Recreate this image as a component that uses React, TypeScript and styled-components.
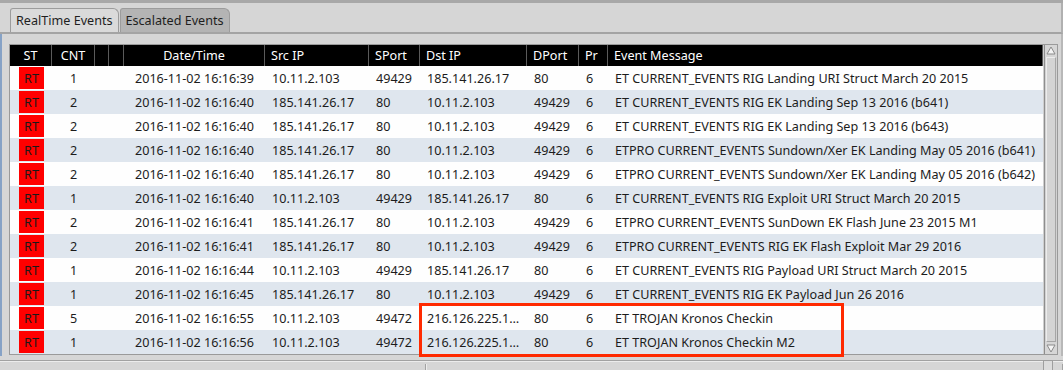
import styled, { createGlobalStyle } from "styled-components";

const GlobalStyle = createGlobalStyle`
  html, body {
    margin: 0;
    padding: 0;
    background: #d6d6d6;
  }
  body {
    font-family: "Noto Sans", "Open Sans", sans-serif;
    font-size: 12.6px;
    color: #1c1c1c;
  }
`;

type EventRow = {
  cnt: string;
  time: string;
  src: string;
  sport: string;
  dst: string;
  dport: string;
  pr: string;
  msg: string;
};

const A = "185.141.26.17";
const B = "10.11.2.103";
const K = "216.126.225.1…";

const rows: EventRow[] = [
  { cnt: "1", time: "16:16:39", src: B, sport: "49429", dst: A, dport: "80", pr: "6", msg: "ET CURRENT_EVENTS RIG Landing URI Struct March 20 2015" },
  { cnt: "2", time: "16:16:40", src: A, sport: "80", dst: B, dport: "49429", pr: "6", msg: "ET CURRENT_EVENTS RIG EK Landing Sep 13 2016 (b641)" },
  { cnt: "2", time: "16:16:40", src: A, sport: "80", dst: B, dport: "49429", pr: "6", msg: "ET CURRENT_EVENTS RIG EK Landing Sep 13 2016 (b643)" },
  { cnt: "2", time: "16:16:40", src: A, sport: "80", dst: B, dport: "49429", pr: "6", msg: "ETPRO CURRENT_EVENTS Sundown/Xer EK Landing May 05 2016 (b641)" },
  { cnt: "2", time: "16:16:40", src: A, sport: "80", dst: B, dport: "49429", pr: "6", msg: "ETPRO CURRENT_EVENTS Sundown/Xer EK Landing May 05 2016 (b642)" },
  { cnt: "1", time: "16:16:40", src: B, sport: "49429", dst: A, dport: "80", pr: "6", msg: "ET CURRENT_EVENTS RIG Exploit URI Struct March 20 2015" },
  { cnt: "2", time: "16:16:41", src: A, sport: "80", dst: B, dport: "49429", pr: "6", msg: "ETPRO CURRENT_EVENTS SunDown EK Flash June 23 2015 M1" },
  { cnt: "2", time: "16:16:41", src: A, sport: "80", dst: B, dport: "49429", pr: "6", msg: "ETPRO CURRENT_EVENTS RIG EK Flash Exploit Mar 29 2016" },
  { cnt: "1", time: "16:16:44", src: B, sport: "49429", dst: A, dport: "80", pr: "6", msg: "ET CURRENT_EVENTS RIG Payload URI Struct March 20 2015" },
  { cnt: "1", time: "16:16:45", src: A, sport: "80", dst: B, dport: "49429", pr: "6", msg: "ET CURRENT_EVENTS RIG EK Payload Jun 26 2016" },
  { cnt: "5", time: "16:16:55", src: B, sport: "49472", dst: K, dport: "80", pr: "6", msg: "ET TROJAN Kronos Checkin" },
  { cnt: "1", time: "16:16:56", src: B, sport: "49472", dst: K, dport: "80", pr: "6", msg: "ET TROJAN Kronos Checkin M2" },
];

const COLS = "42px 43px 14px 15px 141px 104px 51px 107px 52px 29px 1fr";

const Window = styled.div`
  position: relative;
  width: 1063px;
  height: 370px;
  box-sizing: border-box;
  border-top: 3px solid #a8a8a8;
  background: #d6d6d6;
  display: flex;
  flex-direction: column;
  overflow: hidden;
`;

const TabBar = styled.div`
  flex: none;
  height: 29px;
  display: flex;
  align-items: flex-end;
  padding-left: 10px;
  border-bottom: 2px solid #a4a4a4;
  border-right: 2px solid #b0b0b0;
`;

const Tab = styled.div<{ $active?: boolean }>`
  height: 24px;
  box-sizing: border-box;
  display: flex;
  align-items: center;
  padding: 0 5px;
  border: 1px solid #9c9c9c;
  border-bottom: none;
  border-radius: 3px 6px 0 0;
  background: ${(p) => (p.$active ? "#dadada" : "#b4b4b4")};
  color: #1e1e1e;
  margin-right: 1px;
  white-space: nowrap;
`;

const Pane = styled.div`
  flex: none;
  display: flex;
  flex-direction: column;
  padding: 10px 0 1px 7px;
  border-left: 2px solid #86a2c6;
  border-right: 2px solid #b8b8b8;
`;

const Frame = styled.div`
  display: flex;
  width: 1049px;
  box-sizing: border-box;
  border: 1px solid #9a9a9a;
  background: #fdfdfd;
`;

const Table = styled.div`
  width: 1034px;
  display: grid;
  grid-template-columns: ${COLS};
  grid-auto-rows: 24px;
  grid-template-rows: 21px;
  background: #fefefe;
  border-right: 1px solid #cfcfcf;
`;

const HeadCell = styled.div<{ $align?: string }>`
  background: #000;
  color: #fff;
  display: flex;
  align-items: center;
  justify-content: ${(p) => p.$align ?? "flex-start"};
  padding-left: ${(p) => (p.$align === "center" ? 0 : 6)}px;
  border-right: 1px solid #5a5a5a;
  white-space: nowrap;
  overflow: hidden;
  &:last-child {
    border-right: none;
  }
`;

const Cell = styled.div<{ $align?: string; $odd?: boolean }>`
  background: ${(p) => (p.$odd ? "#dfe6ee" : "#fefefe")};
  display: flex;
  align-items: center;
  justify-content: ${(p) => p.$align ?? "flex-start"};
  padding-left: ${(p) => (p.$align === "center" ? 0 : 7)}px;
  white-space: nowrap;
  overflow: hidden;
`;

const Badge = styled.span`
  width: 25px;
  height: 22px;
  background: #ff0000;
  color: #1a1a1a;
  display: flex;
  align-items: center;
  justify-content: center;
  margin-left: 1px;
`;

const Scrollbar = styled.div`
  width: 12px;
  display: flex;
  flex-direction: column;
  border-left: 1px solid #8e8e8e;
  background: #d2d2d2;
`;

const Arrow = styled.div`
  height: 12px;
  display: flex;
  align-items: center;
  justify-content: center;
  background: #d6d6d6;
`;

const Thumb = styled.div`
  flex: 1;
  margin: 0 1px;
  border: 1px solid #a6a6a6;
  border-top-color: #ececec;
  border-left-color: #ececec;
  background: #d4d4d4;
`;

const StatusBar = styled.div`
  flex: 1;
  display: flex;
  margin-top: 4px;
  border-top: 1px solid #a2a2a2;
  box-shadow: inset 0 1px 0 #ececec;
`;

const StatusField = styled.div<{ $w?: number }>`
  width: ${(p) => (p.$w ? `${p.$w}px` : "auto")};
  flex: ${(p) => (p.$w ? "none" : 1)};
  margin-top: 3px;
  border-right: 1px solid #a2a2a2;
  box-shadow: 1px 0 0 #ececec;
`;

const Grip = styled.div`
  position: absolute;
  left: 1043px;
  top: 357px;
  width: 10px;
  height: 12px;
  border: 1px solid #9e9e9e;
  background: #dcdcdc;
  box-sizing: border-box;
`;

const Highlight = styled.div`
  position: absolute;
  left: 419px;
  top: 300px;
  width: 425px;
  height: 54px;
  box-sizing: border-box;
  border: 3px solid #ff2a00;
  pointer-events: none;
`;

const Tri = ({ down }: { down?: boolean }) => (
  <svg width="10" height="10" viewBox="0 0 10 10">
    <polygon
      points={down ? "1,2 9,2 5,9" : "1,8 9,8 5,1"}
      fill="#f4f4f4"
      stroke="#8a8a8a"
      strokeWidth="1"
    />
  </svg>
);

const headers: [string, string?][] = [
  ["ST", "center"],
  ["CNT", "center"],
  [""],
  [""],
  ["Date/Time", "center"],
  ["Src IP"],
  ["SPort"],
  ["Dst IP"],
  ["DPort"],
  ["Pr"],
  ["Event Message"],
];

export default function App() {
  return (
    <>
      <GlobalStyle />
      <Window>
        <TabBar>
          <Tab $active>RealTime Events</Tab>
          <Tab>Escalated Events</Tab>
        </TabBar>
        <Pane>
          <Frame>
            <Table>
              {headers.map(([label, align], i) => (
                <HeadCell key={i} $align={align}>
                  {label}
                </HeadCell>
              ))}
              {rows.map((r, i) => {
                const odd = i % 2 === 1;
                return [
                  <Cell key={`st${i}`} $odd={odd} $align="center">
                    <Badge>RT</Badge>
                  </Cell>,
                  <Cell key={`c${i}`} $odd={odd} $align="center">{r.cnt}</Cell>,
                  <Cell key={`e1${i}`} $odd={odd} />,
                  <Cell key={`e2${i}`} $odd={odd} />,
                  <Cell key={`t${i}`} $odd={odd} $align="center">2016-11-02 {r.time}</Cell>,
                  <Cell key={`s${i}`} $odd={odd}>{r.src}</Cell>,
                  <Cell key={`sp${i}`} $odd={odd}>{r.sport}</Cell>,
                  <Cell key={`d${i}`} $odd={odd}>{r.dst}</Cell>,
                  <Cell key={`dp${i}`} $odd={odd}>{r.dport}</Cell>,
                  <Cell key={`p${i}`} $odd={odd}>{r.pr}</Cell>,
                  <Cell key={`m${i}`} $odd={odd}>{r.msg}</Cell>,
                ];
              })}
            </Table>
            <Scrollbar>
              <Arrow>
                <Tri />
              </Arrow>
              <Thumb />
              <Arrow>
                <Tri down />
              </Arrow>
            </Scrollbar>
          </Frame>
        </Pane>
        <StatusBar>
          <StatusField $w={425} />
          <StatusField />
        </StatusBar>
        <Grip />
        <Highlight />
      </Window>
    </>
  );
}
